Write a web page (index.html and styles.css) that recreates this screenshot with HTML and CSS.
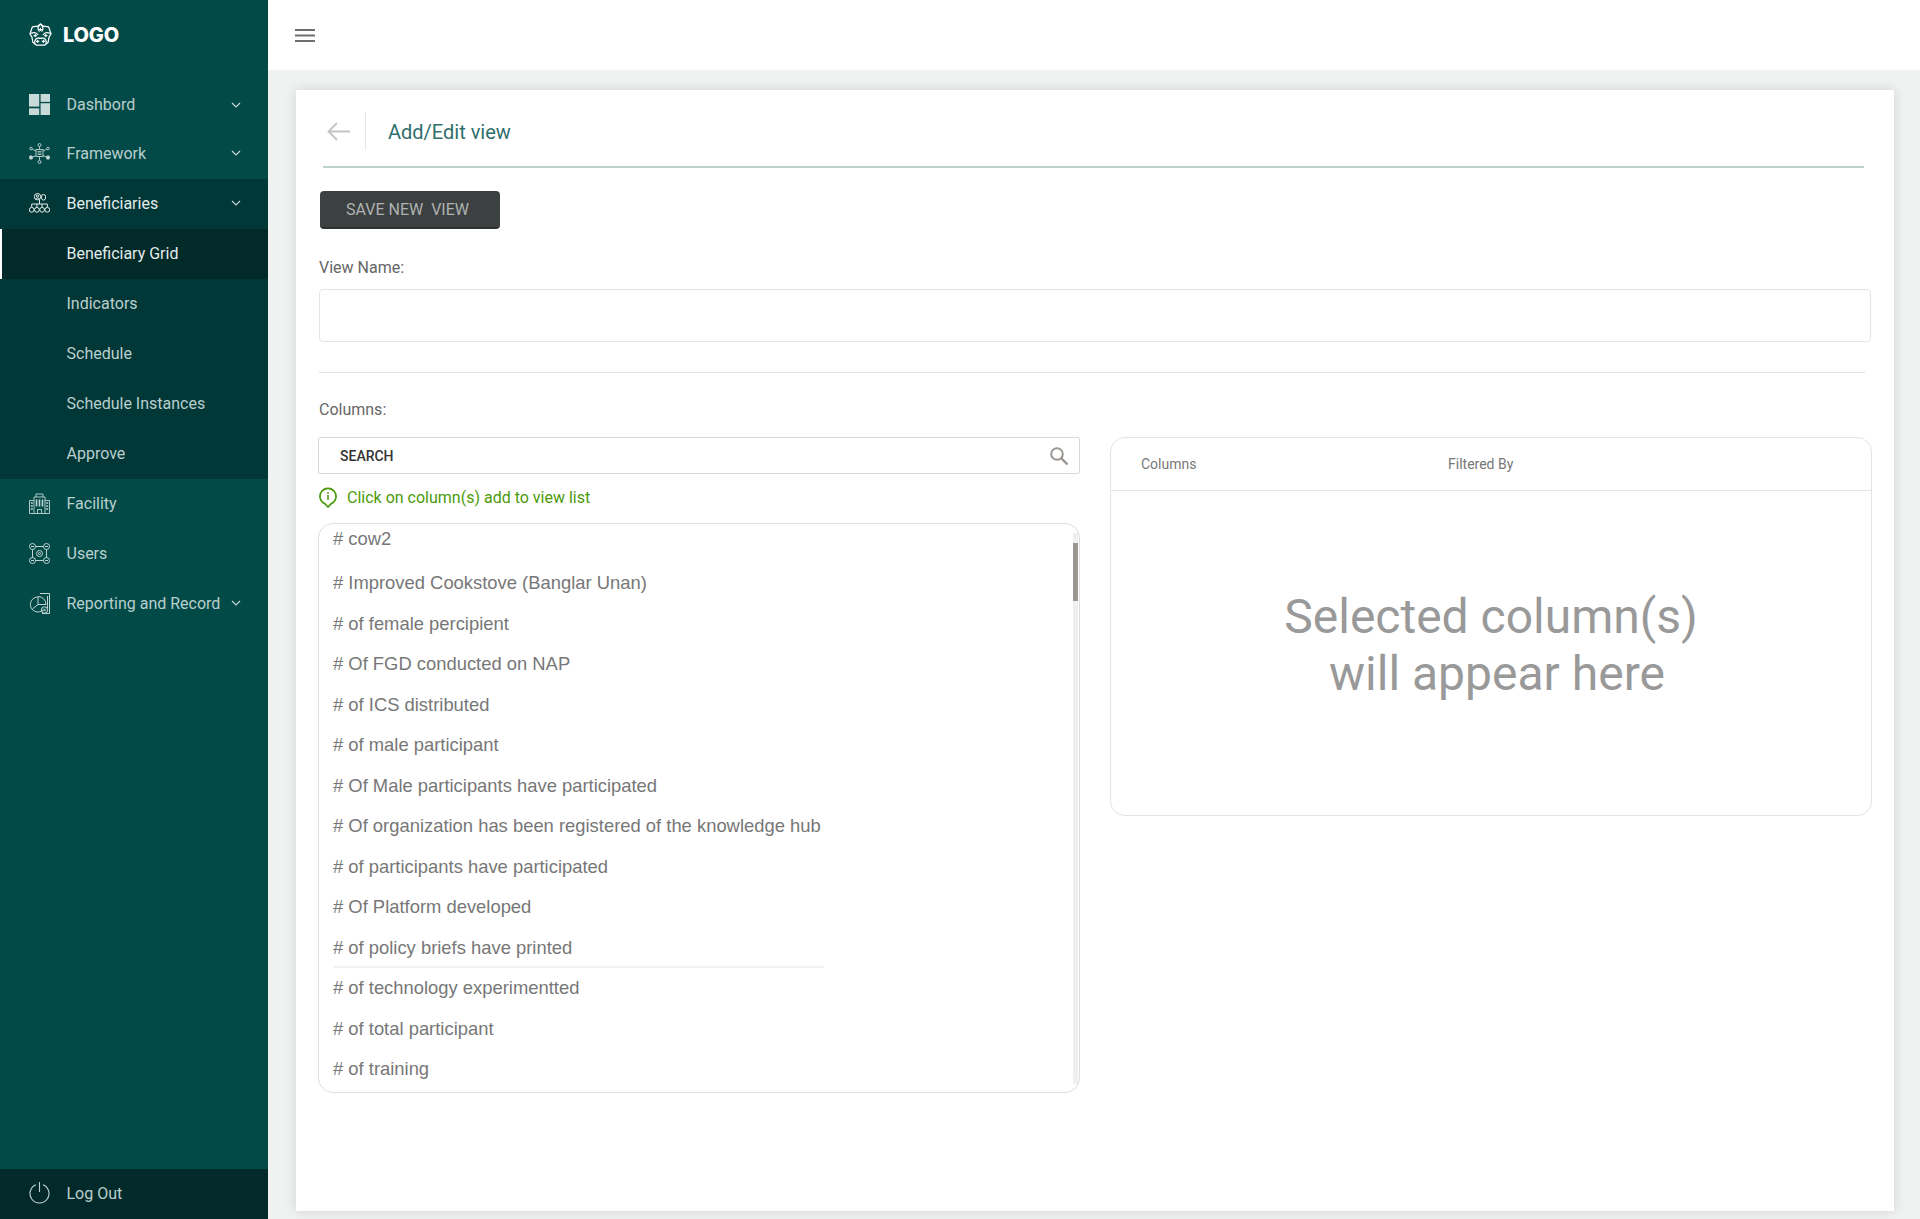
FILE: index.html
```html
<!doctype html>
<html>

<head>
    <meta charset="utf-8">
    <meta name="viewport" content="width=device-width, initial-scale=1">
    <title>Add/Edit view</title>
    <link rel="stylesheet" href="styles.css">
</head>

<body>
    <aside class="sidebar">
        <div class="logo">
            <svg class="logo-icon" viewBox="0 0 24 24" fill="none" stroke="#fff" stroke-width="1.300" stroke-linejoin="round">
                <path d="M12 1l3 2.300 5.500.7 2.500 7.500-2 3 -1 5.500-3.500 3H7.500L4 20l-1-5.500-2-3L3.500 4 9 3.300z"/>
                <path d="M12 1c-3 2.500-3.500 5.500-1 8M12 1c3 2.500 3.500 5.500 1 8M1.500 11c3.500-1.500 6.500-1 8 1.500M22.500 11c-3.500-1.500-6.500-1-8 1.500M6 22c-.5-3.500 1-6 4-6.500M18 22c.5-3.500-1-6-4-6.500M10 15.500c1.300.7 2.700.7 4 0"/>
                <path d="M12 5v3.400M10.300 6.700h3.400M6.500 11.500v3.400M4.800 13.200h3.400M17.500 11.500v3.400M15.800 13.200h3.400M9 17.500v3.400M7.300 19.200h3.400M15 17.500v3.400M13.300 19.200h3.400" stroke-width="1.100"/>
            </svg>
            <span class="logo-text">LOGO</span>
        </div>

        <nav class="nav">
            <a class="nav-item first">
                <svg class="nav-icon" viewBox="0 0 20.500 20.500" fill="#c9dbd9">
                    <rect x="0" y="0" width="10" height="12.300"/>
                    <rect x="0" y="14" width="10" height="6.500"/>
                    <rect x="11.300" y="0" width="9.200" height="7.700"/>
                    <rect x="11.300" y="9" width="9.200" height="11.500"/>
                </svg>
                <span class="nav-label">Dashbord</span>
                <svg class="chevron" viewBox="0 0 10 6"><path d="M1 1l4 4 4-4"/></svg>
            </a>
            <a class="nav-item">
                <svg class="nav-icon" viewBox="0 0 21 21" fill="none" stroke="#c2d4d2" stroke-width=".9">
                    <rect x="7" y="6.500" width="7" height="7"/>
                    <path d="M8.500 8.500h4M8.500 10h4M8.500 11.500h4" stroke-width=".8"/>
                    <circle cx="10.500" cy="2" r="1.500"/>
                    <circle cx="10.500" cy="19" r="1.500"/>
                    <circle cx="2" cy="5.500" r="1.300"/>
                    <circle cx="19" cy="5.500" r="1.300"/>
                    <circle cx="2" cy="14.500" r="1.700" fill="#c2d4d2"/>
                    <circle cx="19" cy="14.500" r="1.700" fill="#c2d4d2"/>
                    <path d="M10.500 3.500v3M10.500 13.500v4M3.300 6.200l3.700 2M17.700 6.200l-3.700 2M3.700 14l3.300-1.500M17.300 14L14 12.500"/>
                </svg>
                <span class="nav-label">Framework</span>
                <svg class="chevron" viewBox="0 0 10 6"><path d="M1 1l4 4 4-4"/></svg>
            </a>
            <a class="nav-item open">
                <svg class="nav-icon" viewBox="0 0 21 21" fill="none" stroke="#e3eceb" stroke-width="1">
                    <circle cx="8.500" cy="3.700" r="3.200"/>
                    <circle cx="8.500" cy="3" r="1.100"/>
                    <path d="M6.500 6c.5-1.200 3.500-1.200 4 0"/>
                    <rect x="12.500" y="1.500" width="4" height="5.500" rx="1.800"/>
                    <path d="M10.500 7v4M2.700 14v-3h15.600v3M7.900 11v3M13.100 11v3"/>
                    <circle cx="2.700" cy="16.800" r="2.400"/>
                    <circle cx="7.900" cy="16.800" r="2.400"/>
                    <circle cx="13.100" cy="16.800" r="2.400"/>
                    <circle cx="18.300" cy="16.800" r="2.400"/>
                </svg>
                <span class="nav-label">Beneficiaries</span>
                <svg class="chevron" viewBox="0 0 10 6"><path d="M1 1l4 4 4-4"/></svg>
            </a>
            <div class="subnav">
                <a class="sub-item active">Beneficiary Grid</a>
                <a class="sub-item">Indicators</a>
                <a class="sub-item">Schedule</a>
                <a class="sub-item">Schedule Instances</a>
                <a class="sub-item">Approve</a>
            </div>
            <a class="nav-item">
                <svg class="nav-icon" viewBox="0 0 21 21" fill="none" stroke="#c2d4d2" stroke-width=".9">
                    <path d="M.5 20.500v-13h4.500M20.500 20.500v-13H16M5 20.500V4h11v16.500M.5 20.500h20M7 4V1h7v3M8.500 20.500v-4h4v4"/>
                    <path d="M7.500 6.500v7M10.500 6.500v7M13.500 6.500v7" stroke-width="1.600"/>
                    <path d="M1.800 10h2M1.800 13h2M1.800 16h2M17.200 10h2M17.200 13h2M17.200 16h2" stroke-width="1.400"/>
                </svg>
                <span class="nav-label">Facility</span>
            </a>
            <a class="nav-item">
                <svg class="nav-icon" viewBox="0 0 21 21" fill="none" stroke="#c2d4d2" stroke-width="1">
                    <circle cx="3.500" cy="3.500" r="3"/>
                    <circle cx="17.500" cy="3.500" r="3"/>
                    <circle cx="3.500" cy="17.500" r="3"/>
                    <circle cx="17.500" cy="17.500" r="3"/>
                    <circle cx="10.500" cy="10.500" r="3"/>
                    <circle cx="10.500" cy="10.500" r="1"/>
                    <path d="M6.500 3.500h8M6.500 17.500h8M3.500 6.500v8M17.500 6.500v8M2 3.500h3M16 3.500h3M2 17.500h3M16 17.500h3"/>
                </svg>
                <span class="nav-label">Users</span>
            </a>
            <a class="nav-item">
                <svg class="nav-icon" viewBox="0 0 21 21" fill="none" stroke="#c2d4d2" stroke-width="1">
                    <path d="M9 4a7.500 7.500 0 1 0 5 13"/>
                    <path d="M9 4v7.500L3.500 16M9 11.500h8a8 8 0 0 0-8-8"/>
                    <path d="M11 .5h9.500v20H13M18.500 3v12"/>
                    <circle cx="15.500" cy="17" r="3.200"/>
                    <path d="M14 15.500l3 3M17 15.500l-3 3"/>
                </svg>
                <span class="nav-label">Reporting and Record</span>
                <svg class="chevron" viewBox="0 0 10 6"><path d="M1 1l4 4 4-4"/></svg>
            </a>
        </nav>

        <a class="logout">
            <svg class="nav-icon power" viewBox="0 0 21 22" fill="none" stroke="#c2d4d2" stroke-width="1.100">
                <path d="M7 2.700a9.500 9.500 0 1 0 7 0"/>
                <path d="M10.500 0v10"/>
            </svg>
            <span class="nav-label">Log Out</span>
        </a>
    </aside>

    <div class="main">
        <header class="topbar">
            <svg class="menu-icon" viewBox="0 0 20 13" fill="#6b6f72">
                <rect y="0" width="20" height="2"/>
                <rect y="5.500" width="20" height="2"/>
                <rect y="11" width="20" height="2"/>
            </svg>
        </header>

        <div class="content">
            <section class="card">
                <div class="card-head">
                    <svg class="back-icon" viewBox="0 0 23 19" fill="none" stroke="#c4c4c4" stroke-width="1.800">
                        <path d="M23 9.500H1.500M10 1L1.500 9.500 10 18"/>
                    </svg>
                    <span class="head-sep"></span>
                    <h1 class="card-title">Add/Edit view</h1>
                </div>

                <button class="save-btn">SAVE NEW&nbsp; VIEW</button>

                <label class="field-label">View Name:</label>
                <input class="name-input" type="text">
                <hr class="divider">

                <label class="field-label columns-label">Columns:</label>

                <div class="columns-row">
                    <div class="col-left">
                        <div class="search">
                            <span class="search-text">SEARCH</span>
                            <svg class="search-icon" viewBox="0 0 18 18" fill="none" stroke="#999591" stroke-width="2">
                                <circle cx="7" cy="7" r="5.800"/>
                                <path d="M11 11l6.500 6.500" stroke-width="2.400"/>
                            </svg>
                        </div>
                        <div class="hint">
                            <svg class="hint-icon" viewBox="0 0 18 21" fill="none" stroke="#4c9a0a" stroke-width="1.700">
                                <path d="M9 20l-3.200-3.300a8 8 0 1 1 6.400 0z"/>
                                <path d="M9 5v1.700M9 8v5" stroke-width="1.500"/>
                            </svg>
                            <span>Click on column(s) add to view list</span>
                        </div>
                        <div class="col-list">
                            <div class="col-item first"># cow2</div>
                            <div class="col-item"># Improved Cookstove (Banglar Unan)</div>
                            <div class="col-item"># of female percipient</div>
                            <div class="col-item"># Of FGD conducted on NAP</div>
                            <div class="col-item"># of ICS distributed</div>
                            <div class="col-item"># of male participant</div>
                            <div class="col-item"># Of Male participants have participated</div>
                            <div class="col-item"># Of organization has been registered of the knowledge hub</div>
                            <div class="col-item"># of participants have participated</div>
                            <div class="col-item"># Of Platform developed</div>
                            <div class="col-item underlined"># of policy briefs have printed</div>
                            <div class="col-item"># of technology experimentted</div>
                            <div class="col-item"># of total participant</div>
                            <div class="col-item"># of training</div>
                            <div class="scroll-track"><div class="scroll-thumb"></div></div>
                        </div>
                    </div>

                    <div class="col-right">
                        <div class="selected-head">
                            <span class="head-columns">Columns</span>
                            <span>Filtered By</span>
                        </div>
                        <div class="selected-empty">Selected column(s)<br>&nbsp;will appear here</div>
                    </div>
                </div>
            </section>
        </div>
    </div>
</body>

</html>
```

FILE: styles.css
```css
* {
    box-sizing: border-box;
}

html, body {
    height: 100%;
}

body {
    margin: 0;
    display: flex;
    font-family: 'Roboto', sans-serif;
    font-size: 16px;
    color: #666;
    background-color: #f0f2f1;
}

/* sidebar */
.sidebar {
    width: 268px;
    flex-shrink: 0;
    height: 1219px;
    display: flex;
    flex-direction: column;
    background-color: #024a48;
}

.logo {
    height: 80px;
    padding: 0 0 11px 29px;
    display: flex;
    align-items: center;
    gap: 11px;
}

.logo-icon {
    width: 23px;
    height: 23px;
}

.logo-text {
    font-family: 'Inter', sans-serif;
    font-weight: 800;
    font-size: 20px;
    letter-spacing: -.2px;
    color: #fff;
}

.nav {
    flex: 1;
}

.nav-item, .logout {
    height: 50px;
    padding: 0 27px 2px 29px;
    display: flex;
    align-items: center;
    font-size: 16px;
    color: #b9cfcd;
}

.nav-item.first {
    height: 49px;
    padding-bottom: 0;
}

.nav-item.open {
    background-color: #013837;
    color: #e3eceb;
}

.nav-icon {
    width: 21px;
    height: 21px;
    margin-right: 16.500px;
    flex-shrink: 0;
}

.nav-icon.power {
    height: 22px;
}

.nav-label {
    flex: 1;
    white-space: nowrap;
}

.chevron {
    width: 10px;
    height: 6px;
    flex-shrink: 0;
    fill: none;
    stroke: #c2d4d2;
    stroke-width: 1.200;
}

.subnav {
    background-color: #013837;
}

.sub-item {
    display: flex;
    align-items: center;
    height: 50px;
    padding: 0 0 2px 66.500px;
    color: #b9cfcd;
}

.sub-item.active {
    background-color: #022a29;
    border-left: 2px solid #fff;
    padding-left: 64.500px;
    color: #e3eceb;
}

.logout {
    background-color: #022a2a;
}

/* main area */
.main {
    flex: 1;
    min-width: 0;
    height: 1219px;
    display: flex;
    flex-direction: column;
}

.topbar {
    height: 70px;
    flex-shrink: 0;
    padding-left: 27px;
    display: flex;
    align-items: center;
    background-color: #fff;
}

.menu-icon {
    width: 20px;
    height: 13px;
}

.content {
    flex: 1;
    min-height: 0;
    padding: 20px 26px 8px 28px;
    display: flex;
}

.card {
    flex: 1;
    padding: 22px 22px 0 22px;
    background-color: #fff;
    box-shadow: 0 0 12px rgba(0, 0, 0, .13);
}

.card-head {
    height: 38px;
    margin: 0 8px 0 5px;
    padding-bottom: 16px;
    display: flex;
    align-items: center;
    border-bottom: 2px solid #c0d2d0;
    box-sizing: content-box;
}

.back-icon {
    width: 23px;
    height: 19px;
    margin-left: 4px;
}

.head-sep {
    width: 1px;
    height: 38px;
    margin-left: 15px;
    background-color: #e6e6e6;
}

.card-title {
    margin: 0 0 0 22px;
    padding-top: 2px;
    font-size: 20px;
    font-weight: 400;
    color: #2f6f6c;
}

.save-btn {
    display: block;
    width: 180px;
    height: 38px;
    margin: 23px 0 0 2px;
    padding: 0 0 0 26px;
    text-align: left;
    font-family: 'Roboto', sans-serif;
    font-size: 16px;
    color: #aeb2b2;
    background-color: #3c4040;
    border: none;
    border-bottom: 2px solid #2f3232;
    border-radius: 4px;
}

.field-label {
    display: block;
    margin-top: 29px;
    padding-left: 1px;
    line-height: 20px;
    color: #666;
}

.name-input {
    display: block;
    width: 1552px;
    height: 53px;
    margin: 11px 0 0 1px;
    border: 1px solid #e4e4e4;
    border-radius: 4px;
}

.divider {
    width: 1546px;
    margin: 30px 0 0 1px;
    border: none;
    border-top: 1px solid #e2e2e2;
}

.columns-label {
    margin-top: 27px;
}

.columns-row {
    margin-top: 17px;
    display: flex;
    gap: 30px;
    align-items: flex-start;
}

.col-left {
    width: 762px;
}

.search {
    height: 37px;
    padding: 0 11px 0 21px;
    display: flex;
    align-items: center;
    justify-content: space-between;
    border: 1px solid #d9d9d9;
    border-radius: 2px;
}

.search-text {
    font-size: 14px;
    font-weight: 500;
    color: #333;
}

.search-icon {
    width: 18px;
    height: 18px;
}

.hint {
    height: 49px;
    padding: 0 0 2px 1px;
    display: flex;
    align-items: center;
    gap: 10px;
    color: #4c9a0a;
}

.hint-icon {
    width: 18px;
    height: 21px;
}

.col-list {
    position: relative;
    height: 570px;
    padding: 1px 14px 0;
    overflow: hidden;
    border: 1px solid #dedede;
    border-radius: 15px;
}

.col-item {
    width: 491px;
    height: 40.500px;
    line-height: 40.500px;
    font-family: 'Liberation Sans', sans-serif;
    font-size: 18.400px;
    color: #777;
    white-space: nowrap;
}

.col-item.first {
    height: 30px;
    line-height: 28px;
    margin-bottom: 8px;
}

.col-item.underlined {
    border-bottom: 2px solid #f2f2f2;
}

.scroll-track {
    position: absolute;
    top: 9px;
    right: 1px;
    bottom: 8px;
    width: 5px;
    background-color: #efefef;
}

.scroll-thumb {
    height: 58px;
    margin-top: 10px;
    background-color: #9a9692;
}

.col-right {
    width: 762px;
    height: 379px;
    border: 1px solid #e4e4e4;
    border-radius: 15px;
}

.selected-head {
    height: 53px;
    padding-left: 30px;
    display: flex;
    align-items: center;
    font-size: 14px;
    color: #777;
    border-bottom: 1px solid #e4e4e4;
}

.head-columns {
    width: 307px;
}

.selected-empty {
    margin-top: 97px;
    text-align: center;
    font-size: 48px;
    line-height: 57px;
    color: #999;
}
```
